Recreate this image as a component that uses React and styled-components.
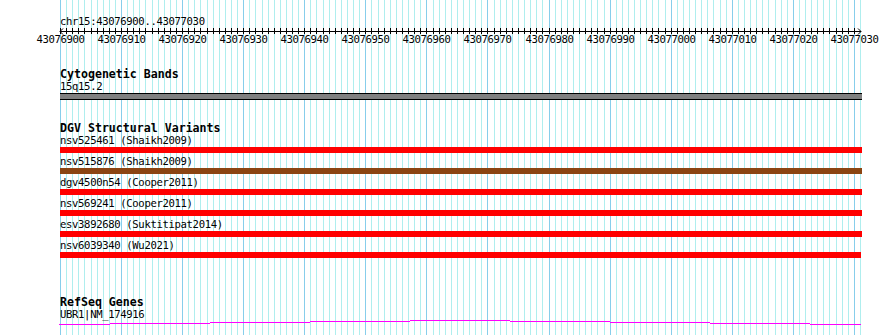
import React from 'react';
import styled, { createGlobalStyle } from 'styled-components';

const START = 43076900;
const END = 43077030;
const LEFT = 60;
const PX_PER_BP = 800 / (END - START + 1);

const bpToX = bp => Math.round(LEFT + (bp - START) * PX_PER_BP);

const GlobalStyle = createGlobalStyle`
  html, body {
    margin: 0;
    padding: 0;
    background: #ffffff;
  }
`;

const Panel = styled.div`
  position: relative;
  width: 890px;
  height: 335px;
  overflow: hidden;
  background: #ffffff;
  font-family: 'DejaVu Sans Mono', 'Liberation Mono', monospace;
  color: #000;
`;

const GridLayer = styled.svg`
  position: absolute;
  top: 0;
  left: 0;
  z-index: 0;
`;

const Content = styled.div`
  position: relative;
  z-index: 1;
  display: flex;
  flex-direction: column;
`;

const RegionLabel = styled.div`
  margin: 15px 0 0 ${LEFT}px;
  font-size: 10.6px;
  letter-spacing: -0.35px;
  line-height: 12px;
  white-space: pre;
`;

const RulerSvg = styled.svg`
  display: block;
`;

const Track = styled.section`
  display: flex;
  flex-direction: column;
  padding-left: ${LEFT}px;
  margin-top: ${p => p.$gap}px;
`;

const TrackTitle = styled.h3`
  margin: 0;
  font-size: 11.6px;
  font-weight: bold;
  line-height: 12px;
  white-space: pre;
`;

const FeatureLabel = styled.div`
  font-size: 10.6px;
  letter-spacing: -0.35px;
  line-height: 12px;
  white-space: pre;
`;

const Band = styled.div`
  margin-top: 1px;
  width: 802px;
  height: 5px;
  background: #808080;
  border-top: 1px solid #000;
  border-bottom: 1px solid #000;
`;

const VariantRow = styled.div`
  display: flex;
  flex-direction: column;
  margin-bottom: 2px;
`;

const VariantBar = styled.div`
  margin-top: 1px;
  width: ${p => p.$width}px;
  height: 6px;
  background: ${p => p.$color};
`;

const GeneSvg = styled.svg`
  display: block;
  margin-left: -1px;
`;

const variants = [
  { name: 'nsv525461 (Shaikh2009)', color: '#ff0000', width: 802 },
  { name: 'nsv515876 (Shaikh2009)', color: '#8b4513', width: 802 },
  { name: 'dgv4500n54 (Cooper2011)', color: '#ff0000', width: 802 },
  { name: 'nsv569241 (Cooper2011)', color: '#ff0000', width: 802 },
  { name: 'esv3892680 (Suktitipat2014)', color: '#ff0000', width: 802 },
  { name: 'nsv6039340 (Wu2021)', color: '#ff0000', width: 801 },
];

// staircase of the gene model: [from, to, row]
const geneSteps = [
  [0, 51, 4],
  [51, 151, 3],
  [151, 251, 2],
  [251, 351, 1],
  [351, 451, 0],
  [451, 551, 1],
  [551, 651, 2],
  [651, 751, 3],
  [751, 802, 4],
];

const Grid = () => {
  const lines = [];
  for (let i = 0; i <= END - START + 1; i++) {
    const x = bpToX(START + i) + 0.5;
    lines.push(
      <line
        key={i}
        x1={x}
        x2={x}
        y1={0}
        y2={335}
        stroke={i % 10 === 0 ? '#87ceeb' : '#afeeee'}
        strokeWidth={1}
      />
    );
  }
  return (
    <GridLayer width={890} height={335}>
      {lines}
    </GridLayer>
  );
};

const Ruler = () => {
  const ticks = [];
  const labels = [];
  for (let i = 0; i <= END - START; i++) {
    const x = bpToX(START + i) + 0.5;
    ticks.push(<line key={i} x1={x} x2={x} y1={1} y2={7} stroke="#000" />);
    if (i % 10 === 0) {
      labels.push(
        <text
          key={i}
          x={x}
          y={16}
          textAnchor="middle"
          fontSize="10.6"
          letterSpacing="-0.35"
          fontFamily="'DejaVu Sans Mono', monospace"
        >
          {START + i}
        </text>
      );
    }
  }
  return (
    <RulerSvg width={890} height={19}>
      <line x1={LEFT} x2={861} y1={4.5} y2={4.5} stroke="#000" />
      <polyline points="63,1.5 60,4.5 63,7.5" fill="none" stroke="#000" />
      <polyline points="858,1.5 861,4.5 858,7.5" fill="none" stroke="#000" />
      {ticks}
      {labels}
    </RulerSvg>
  );
};

export default function App() {
  return (
    <>
      <GlobalStyle />
      <Panel>
        <Grid />
        <Content>
          <RegionLabel>chr15:43076900..43077030</RegionLabel>
          <Ruler />

          <Track $gap={22}>
            <TrackTitle>Cytogenetic Bands</TrackTitle>
            <FeatureLabel>15q15.2</FeatureLabel>
            <Band />
          </Track>

          <Track $gap={22}>
            <TrackTitle>DGV Structural Variants</TrackTitle>
            {variants.map(v => (
              <VariantRow key={v.name}>
                <FeatureLabel>{v.name}</FeatureLabel>
                <VariantBar $color={v.color} $width={v.width} />
              </VariantRow>
            ))}
          </Track>

          <Track $gap={36}>
            <TrackTitle>RefSeq Genes</TrackTitle>
            <FeatureLabel>UBR1|NM_174916</FeatureLabel>
            <GeneSvg width={804} height={8}>
              {geneSteps.map(([x1, x2, y]) => (
                <line
                  key={x1}
                  x1={x1}
                  x2={x2}
                  y1={y + 0.5}
                  y2={y + 0.5}
                  stroke="#ff00ff"
                  strokeWidth={1.2}
                />
              ))}
            </GeneSvg>
          </Track>
        </Content>
      </Panel>
    </>
  );
}
